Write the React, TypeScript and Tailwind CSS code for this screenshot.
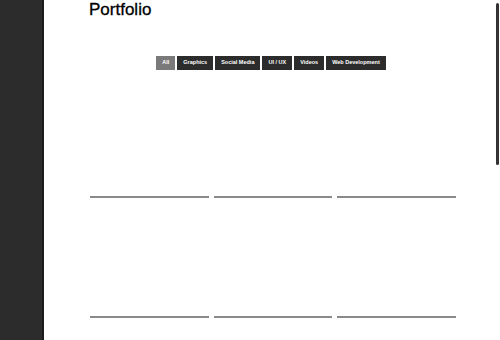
import React from 'react';

const filters = ['All', 'Graphics', 'Social Media', 'UI / UX', 'Videos', 'Web Development'];

const App = () => {
  return (
    <div className="relative w-[500px] h-[340px] overflow-hidden bg-white flex" style={{ fontFamily: '"Liberation Sans", Arial, sans-serif' }}>
      {/* Sidebar */}
      <aside className="w-[44px] shrink-0 bg-[#2c2c2c] border-r-2 border-[#1c1c1c]" />

      {/* Main */}
      <main className="flex-1 flex flex-col">
        <div className="ml-[45px] w-[366px] pt-[1px]">
          <h1 className="text-[17px] leading-none text-black [-webkit-text-stroke:0.3px_black]">Portfolio</h1>
        </div>

        <div className="mt-[38px] flex justify-center gap-[2px] pr-[2px]">
          {filters.map((f, i) => (
            <button
              key={f}
              className={`h-[14px] px-[6px] text-[5.5px] font-bold text-white leading-none ${i === 0 ? 'bg-[#7a7a7a]' : 'bg-[#2c2c2c]'}`}
            >
              {f}
            </button>
          ))}
        </div>

        {/* Grid */}
        <div className="ml-[46px] mt-[8px] w-[366px] grid grid-cols-3 gap-x-[5px]">
          {Array.from({ length: 6 }).map((_, i) => (
            <div key={i} className="h-[120px] border-b-2 border-[#8a8a8a]" />
          ))}
        </div>
      </main>

      {/* Scrollbar thumb */}
      <div className="absolute right-[1px] top-[3px] w-[3px] h-[162px] rounded-full bg-[#333]" />
    </div>
  );
};

export default App;
